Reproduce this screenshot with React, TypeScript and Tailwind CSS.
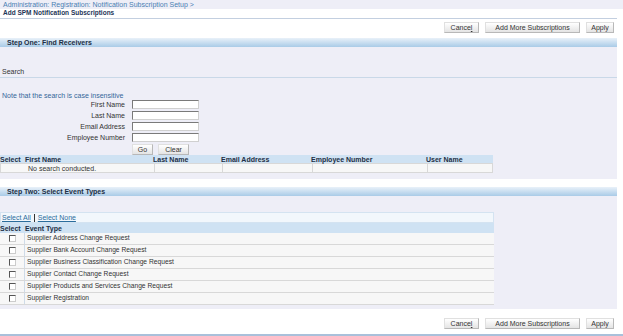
import React from 'react';

const font = { fontFamily: '"Liberation Sans", Arial, sans-serif' };

const Btn: React.FC<{ label: React.ReactNode; w: string }> = ({ label, w }) => (
  <div
    className={`${w} h-[11px] flex items-center justify-center text-[7px] text-[#333] bg-gradient-to-b from-[#ffffff] to-[#e4e4e4] border border-[#b8b8b8] border-t-[#e0e0e0] border-l-[#e0e0e0]`}
  >
    {label}
  </div>
);

const Buttons: React.FC = () => (
  <div className="flex justify-end gap-[6px] pr-[9px]">
    <Btn w="w-[35px]" label={<span>Cance<span className="underline">l</span></span>} />
    <Btn w="w-[95px]" label="Add More Subscriptions" />
    <Btn w="w-[28px]" label="Apply" />
  </div>
);

const StepHeader: React.FC<{ text: string }> = ({ text }) => (
  <div className="w-[617px] h-[9px] flex items-center pl-[7px] text-[7px] font-bold text-[#1d2f45] bg-gradient-to-b from-[#e9f1f9] to-[#a9cbe7]">
    {text}
  </div>
);

const fields = ['First Name', 'Last Name', 'Email Address', 'Employee Number'];
const events = [
  'Supplier Address Change Request',
  'Supplier Bank Account Change Request',
  'Supplier Business Classification Change Request',
  'Supplier Contact Change Request',
  'Supplier Products and Services Change Request',
  'Supplier Registration',
];

const App: React.FC = () => {
  return (
    <div className="w-[623px] h-[336px] bg-white overflow-hidden text-[7px] leading-none" style={font}>
      <div className="h-[9px] bg-[#eeeef7] pl-[3px] flex items-center text-[#4a80b3]">
        Administration: Registration: Notification Subscription Setup &gt;
      </div>
      <div className="w-[617px] h-[10px] pl-[3px] flex items-center font-bold text-[6.5px] text-[#1d3557] border-b border-[#c3cfe0]">
        Add SPM Notification Subscriptions
      </div>
      <div className="pt-[3px]">
        <Buttons />
      </div>
      <div className="h-[5px]" />
      <StepHeader text="Step One: Find Receivers" />
      <div className="w-[617px] h-[132px] bg-[#eeeef7] pt-[20px]">
        <div className="pl-[2px] text-[#333] border-b border-[#c9d8e8] pb-[2px] pt-[1px]">Search</div>
        <div className="pl-[2px] mt-[14px] text-[#35669a]">Note that the search is case insensitive</div>
        <div className="flex flex-col gap-[2px] mt-[1px]">
          {fields.map((f) => (
            <div key={f} className="flex items-center">
              <div className="w-[125px] text-right text-[#333]">{f}</div>
              <div className="ml-[7px] w-[67px] h-[9px] bg-white border border-[#7a7a7a] border-r-[#d0d0d0] border-b-[#d0d0d0]" />
            </div>
          ))}
        </div>
        <div className="flex gap-[5px] ml-[132px] mt-[2px]">
          <Btn w="w-[21px]" label="Go" />
          <Btn w="w-[31px]" label="Clear" />
        </div>
        <div className="w-[493px]">
          <div className="grid grid-cols-[25px_128px_68px_90px_115px_67px] h-[8px] bg-[#cfe2f3] font-bold text-[#1d2f45] items-center">
            <div>Select</div>
            <div>First Name</div>
            <div>Last Name</div>
            <div>Email Address</div>
            <div>Employee Number</div>
            <div>User Name</div>
          </div>
          <div className="grid grid-cols-[25px_128px_68px_90px_115px_67px] h-[10px] bg-[#f7f7f7] border border-[#d8d8d8] text-[#333]">
            <div />
            <div className="pl-[2px] flex items-center">No search conducted.</div>
            <div className="border-l border-[#d8d8d8]" />
            <div className="border-l border-[#d8d8d8]" />
            <div className="border-l border-[#d8d8d8]" />
            <div className="border-l border-[#d8d8d8]" />
          </div>
        </div>
      </div>
      <div className="h-[8px]" />
      <StepHeader text="Step Two: Select Event Types" />
      <div className="w-[617px] h-[113px] bg-[#eeeef7] pt-[16px]">
        <div className="w-[494px] h-[11px] bg-[#f2f7fc] border border-[#d4e3f1] flex items-center pl-[1px] text-[#2b6d9c]">
          <span className="underline">Select All</span>
          <span className="mx-[3px] w-px h-[8px] bg-[#333]" />
          <span className="underline">Select None</span>
        </div>
        <div className="w-[494px] h-[10px] bg-[#cfe2f3] flex items-center font-bold text-[#1d2f45]">
          <div className="w-[25px]">Select</div>
          <div>Event Type</div>
        </div>
        {events.map((e) => (
          <div key={e} className="w-[494px] h-[12px] bg-[#f7f7f7] border-b border-[#d8d8d8] flex items-center text-[#333] text-[6.7px]">
            <div className="w-[25px] h-full flex items-center justify-center border-r border-[#cfdbe8]">
              <div className="w-[7px] h-[7px] bg-white border border-[#555] border-r-[#ccc] border-b-[#ccc]" />
            </div>
            <div className="pl-[2px]">{e}</div>
          </div>
        ))}
      </div>
      <div className="h-[9px]" />
      <Buttons />
      <div className="mt-[5px] h-[2px] w-[623px] bg-[#a9c0da]" />
    </div>
  );
};

export default App;
